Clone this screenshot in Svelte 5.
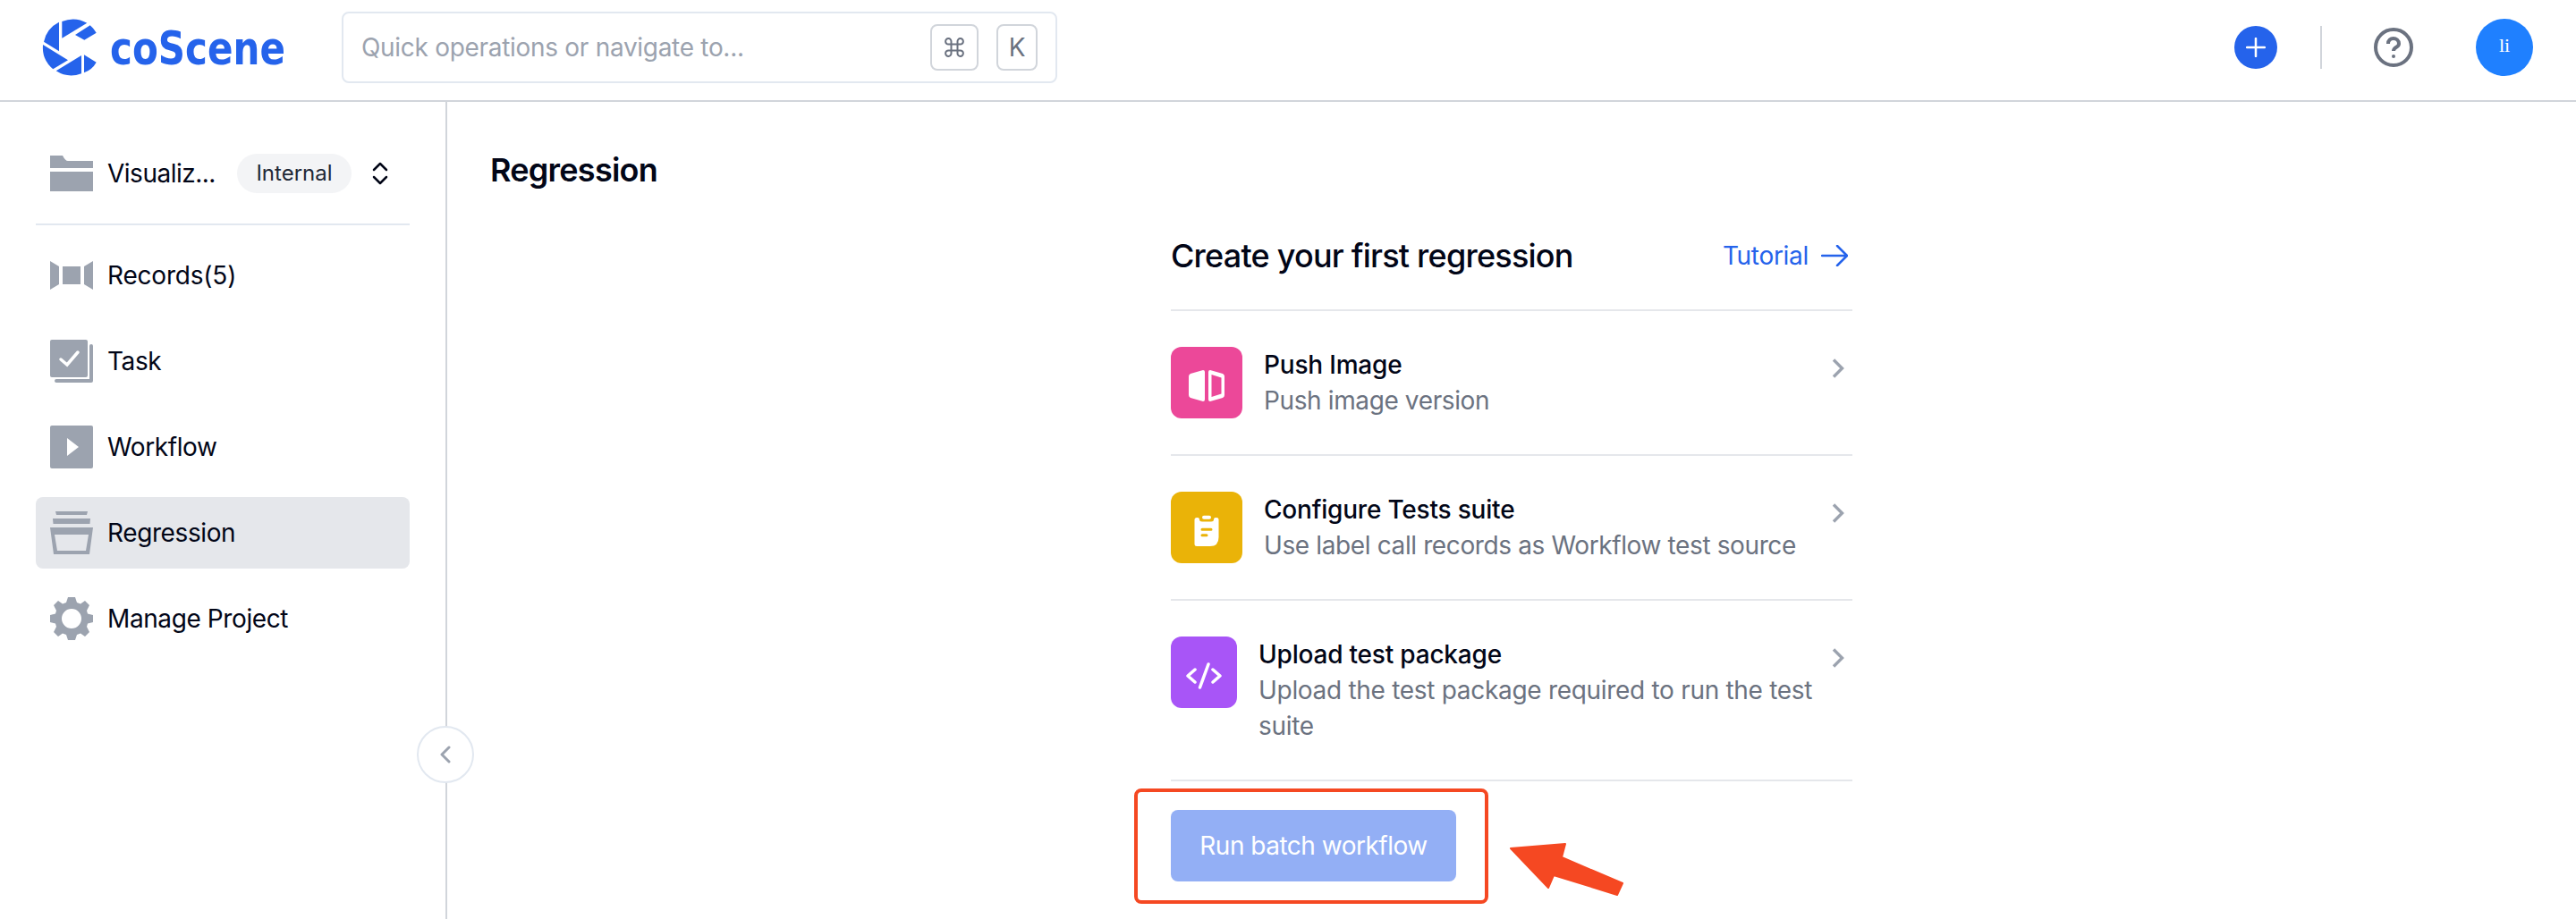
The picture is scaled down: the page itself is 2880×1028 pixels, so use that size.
<script>
  const nav = [
    { id: 'records', label: 'Records(5)' },
    { id: 'task', label: 'Task' },
    { id: 'workflow', label: 'Workflow' },
    { id: 'regression', label: 'Regression', active: true },
    { id: 'manage', label: 'Manage Project' }
  ];
  const steps = [
    { id: 'push', title: 'Push Image', text: 'Push image version' },
    { id: 'suite', title: 'Configure Tests suite', text: 'Use label call records as Workflow test source' },
    { id: 'upload', title: 'Upload test package', text: 'Upload the test package required to run the test suite' }
  ];
</script>

<div class="app">
  <header>
    <svg class="brand" width="280" height="64" viewBox="0 0 280 64">
      <g fill="#2563eb">
        <path d="M21.300 3A32 32 0 0 1 49.300 4.700L21.300 21.700Z" />
        <path d="M52.700 7.300Q57 11 59.700 15.700L46.300 23.700L36 18Z" />
        <path d="M18 3.700V36.300L1 25.700A32 32 0 0 1 18 3.700Z" />
        <path d="M0 29L28 46.300L11.300 56.300A32 32 0 0 1 0 29Z" />
        <path d="M43 41V61.300A32 32 0 0 1 14.700 58.300Z" />
        <path d="M46 40.300L59.700 48.700Q55 57 46 60.300Z" />
      </g>
      <text x="75" y="51" textLength="196" lengthAdjust="spacingAndGlyphs">coScene</text>
    </svg>
    <div class="search">
      <span class="hint">Quick operations or navigate to...</span>
      <kbd class="cmd">
        <svg width="22" height="22" viewBox="0 0 22 22" fill="none" stroke="#6b7280" stroke-width="2"><path d="M7.500 7.500H14.500V14.500H7.500ZM7.500 7.500H4.500A3.200 3.200 0 1 1 7.500 4.500ZM14.500 7.500V4.500A3.200 3.200 0 1 1 17.500 7.500ZM14.500 14.500H17.500A3.200 3.200 0 1 1 14.500 17.500ZM7.500 14.500V17.500A3.200 3.200 0 1 1 4.500 14.500Z" /></svg>
      </kbd>
      <kbd>K</kbd>
    </div>
    <div class="tools">
      <button class="add" aria-label="Add"><svg width="22" height="22" viewBox="0 0 22 22"><path d="M11 1V21M1 11H21" stroke="#fff" stroke-width="2.500" stroke-linecap="round" /></svg></button>
      <i class="sep"></i>
      <svg class="help" width="44" height="44" viewBox="0 0 44 44" fill="none" stroke="#6b7280" stroke-width="4"><circle cx="22" cy="22" r="20" /><path d="M16 18C15.500 10 28 10 28 18C28 22 22 21.500 22 26" /><circle cx="22" cy="32" r="2" fill="#6b7280" stroke="none" /></svg>
      <span class="avatar">li</span>
    </div>
  </header>

  <div class="body">
    <aside>
      <div class="project">
        <svg width="48" height="40" viewBox="0 0 48 40" fill="#9ca3af"><path d="M0 0H14Q17 6 20 6H48V14H0ZM0 18H48V40H0Z" /></svg>
        <span class="name">Visualiz...</span>
        <span class="badge">Internal</span>
        <svg class="updown" width="18" height="26" viewBox="0 0 18 26" fill="none" stroke="#020617" stroke-width="2.500" stroke-linecap="round" stroke-linejoin="round"><path d="M2 9L9 2L16 9M2 17L9 24L16 17" /></svg>
      </div>
      <nav>
        {#each nav as item}
          <a class:active={item.active} href="#{item.id}">
            <svg width="48" height="48" viewBox="0 0 48 48" fill="#9ca3af">
              {#if item.id === 'records'}
                <path d="M0 8L10 14V34L0 40ZM14 14H34V34H14ZM38 14L48 8V40L38 34Z" />
              {:else if item.id === 'task'}
                <rect width="42" height="42" rx="2" /><path d="M12 22L19 28L31 14" fill="none" stroke="#fff" stroke-width="3.500" stroke-linecap="round" /><path d="M46 7V46H7" fill="none" stroke="#9ca3af" stroke-width="4" stroke-linecap="round" stroke-linejoin="round" />
              {:else if item.id === 'workflow'}
                <rect width="48" height="48" rx="2" /><path d="M19 14L32 24L19 34Z" fill="#fff" />
              {:else if item.id === 'regression'}
                <path d="M6 0H42L41 4H7ZM3 8H45L44.500 14H3.500Z" /><path fill-rule="evenodd" d="M0 18H48L44 48H4ZM5 26L8 44H40L43 26Z" />
              {:else}
                <path fill-rule="evenodd" d="M20 0H28L30 6L34 7.500L39 4L44 9L41 15L42 18.500L48 20V28L42 29.500L41 33L44 39L39 44L34 40.500L30 42L28 48H20L18 42L14 40.500L9 44L4 39L7 33L6 29.500L0 28V20L6 18.500L7 15L4 9L9 4L14 7.500L18 6ZM24 13A11 11 0 1 0 24 35A11 11 0 1 0 24 13Z" />
              {/if}
            </svg>
            <span>{item.label}</span>
          </a>
        {/each}
      </nav>
      <button class="collapse" aria-label="Collapse"><svg width="12" height="20" viewBox="0 0 12 20"><path d="M10 2L2 10L10 18" fill="none" stroke="#9ca3af" stroke-width="3" stroke-linecap="round" stroke-linejoin="round" /></svg></button>
    </aside>

    <main>
      <h1>Regression</h1>
      <section>
        <div class="head">
          <h2>Create your first regression</h2>
          <a href="#tutorial">Tutorial <svg width="30" height="24" viewBox="0 0 30 24"><path d="M1 12H28M18 1L29 12L18 23" fill="none" stroke="#2563eb" stroke-width="2.500" stroke-linecap="round" stroke-linejoin="round" /></svg></a>
        </div>
        {#each steps as step}
          <div class="step">
            <div class="tile {step.id}">
              <svg width="40" height="40" viewBox="0 0 40 40" fill="#fff">
                {#if step.id === 'push'}
                  <path d="M16 2L2 6Q0 7 0 9V30Q0 32 2 33L16 37Q18 37 18 35V4Q18 2 16 2ZM22 4V35Q22 37 24 37L38 33Q40 32 40 30V9Q40 7 38 6L24 2Q22 2 22 4ZM25.500 7L36.500 10.500V28.500L25.500 32Z" fill-rule="evenodd" />
                {:else if step.id === 'suite'}
                  <path fill-rule="evenodd" d="M9 5H10Q12 5 12 7Q12 9.500 15 9.500H25Q28 9.500 28 7Q28 5 30 5H31Q33.500 5 33.500 7V27Q33.500 37 24 37H9Q6.500 37 6.500 34.500V7.500Q6.500 5 9 5ZM15 16.700A1.500 1.500 0 0 0 15 19.700H25A1.500 1.500 0 0 0 25 16.700ZM15 23.300A1.500 1.500 0 0 0 15 26.300H20A1.500 1.500 0 0 0 20 23.300Z" /><rect x="15" y="2.700" width="10" height="4" rx="2" />
                {:else}
                  <path d="M10 13L2 20L10 27M30 13L38 20L30 27M25 7L15.500 33" fill="none" stroke="#fff" stroke-width="3.500" stroke-linecap="round" stroke-linejoin="round" />
                {/if}
              </svg>
            </div>
            <div class="copy"><h3>{step.title}</h3><p>{step.text}</p></div>
            <svg class="go" width="14" height="22" viewBox="0 0 14 22"><path d="M2 1.500L11.500 11L2 20.500" fill="none" stroke="#9ca3af" stroke-width="3.400" /></svg>
          </div>
        {/each}
        <div class="action">
          <button class="run">Run batch workflow</button>
          <div class="mark"></div>
          <svg class="pointer" width="130" height="62" viewBox="0 0 130 62"><path d="M2 7L63 2L59 17L127 46L121 59L50 37L44 51Z" fill="#f54822" stroke="#f54822" stroke-width="2" stroke-linejoin="round" /></svg>
        </div>
      </section>
    </main>
  </div>
</div>

<style>
  :global(body) { background: #fff; }
  .app { width: 2880px; height: 1028px; overflow: hidden; display: flex; flex-direction: column; font: 28px/40px Inter, sans-serif; letter-spacing: -0.3px; color: #020617; background: #fff; }
  * { box-sizing: border-box; }
  button { border: 0; padding: 0; font: inherit; display: flex; align-items: center; justify-content: center; }
  a { text-decoration: none; color: inherit; }
  h1, h2, h3, p { margin: 0; }
  svg { flex: none; display: block; }
  header { height: 114px; flex: none; border-bottom: 2px solid #d1d5db; display: flex; align-items: center; padding: 0 48px 6px; }
  .brand { overflow: visible; }
  .brand text { font: bold 52px "DejaVu Sans Condensed", "DejaVu Sans", sans-serif; letter-spacing: 0; fill: #2563eb; }
  .search { width: 800px; height: 80px; margin-left: 54px; border: 2px solid #e2e8f0; border-radius: 8px; display: flex; align-items: center; padding: 0 20px; gap: 20px; }
  .hint { flex: 1; color: #9ca3af; }
  kbd { width: 46px; height: 52px; border: 2px solid #d1d5db; border-radius: 8px; display: flex; align-items: center; justify-content: center; font: inherit; color: #6b7280; }
  kbd.cmd { width: 54px; }
  .tools { margin-left: auto; display: flex; align-items: center; }
  .add { width: 48px; height: 48px; border-radius: 50%; background: #2563eb; }
  .sep { width: 2px; height: 48px; background: #d1d5db; margin: 0 58px 0 48px; }
  .avatar { width: 64px; height: 64px; margin-left: 70px; border-radius: 50%; background: #1f80ff; color: #fff; font: 22px/60px "Liberation Serif", serif; letter-spacing: 0; text-align: center; }
  .body { flex: 1; display: flex; min-height: 0; }
  aside { width: 500px; flex: none; border-right: 2px solid #d1d5db; padding: 0 40px; position: relative; }
  .project { height: 138px; padding: 24px 24px 0 16px; border-bottom: 2px solid #e2e8f0; display: flex; align-items: center; }
  .name { margin-left: 16px; width: 146px; letter-spacing: -0.5px; }
  .badge { width: 129px; height: 44px; border-radius: 22px; background: #f3f4f6; color: #1f2937; font-size: 24px; letter-spacing: 0; line-height: 44px; text-align: center; }
  .updown { margin-left: 23px; }
  nav { display: flex; flex-direction: column; gap: 16px; margin-top: 16px; }
  nav a { height: 80px; border-radius: 8px; padding-left: 16px; display: flex; align-items: center; gap: 16px; letter-spacing: -0.4px; }
  nav a:first-child { letter-spacing: -0.2px; }
  nav a.active { background: #e5e7eb; }
  .collapse { position: absolute; left: 466px; top: 698px; width: 64px; height: 64px; border: 2px solid #e2e8f0; border-radius: 50%; background: #fff; }
  main { flex: 1; padding: 56px 48px 0; }
  h1, h2 { font-size: 36px; line-height: 40px; font-weight: 600; letter-spacing: -0.75px; }
  h2 { font-weight: 500; letter-spacing: -0.78px; }
  section { width: 762px; margin: 56px auto 0; }
  .head { height: 82px; border-bottom: 2px solid #e5e7eb; display: flex; justify-content: space-between; align-items: flex-start; padding-right: 5px; }
  .head a { color: #2563eb; display: flex; align-items: center; gap: 14px; }
  .step { display: flex; align-items: flex-start; padding: 40px 9px 40px 0; border-bottom: 2px solid #e5e7eb; }
  .tile { width: 80px; height: 80px; flex: none; border-radius: 12px; display: flex; align-items: center; justify-content: center; padding-top: 8px; }
  .push { background: #ec4899; }
  .suite { background: #eab308; }
  .upload { background: #a855f7; width: 74px; }
  .copy { flex: 1; margin-left: 24px; }
  h3 { font-size: 28px; line-height: 40px; font-weight: 500; letter-spacing: -0.2px; }
  p { color: #6b7280; letter-spacing: -0.38px; }
  .upload + .copy p { letter-spacing: -0.3px; }
  .go { margin-top: 13px; }
  .action { position: relative; padding-top: 32px; }
  .run { width: 319px; height: 80px; border-radius: 8px; background: #93aff5; color: #fff; letter-spacing: -0.5px; }
  .mark { position: absolute; left: -41px; top: 8px; width: 396px; height: 129px; border: 4px solid #f54822; border-radius: 8px; }
  .pointer { position: absolute; left: 378px; top: 68px; }
</style>
